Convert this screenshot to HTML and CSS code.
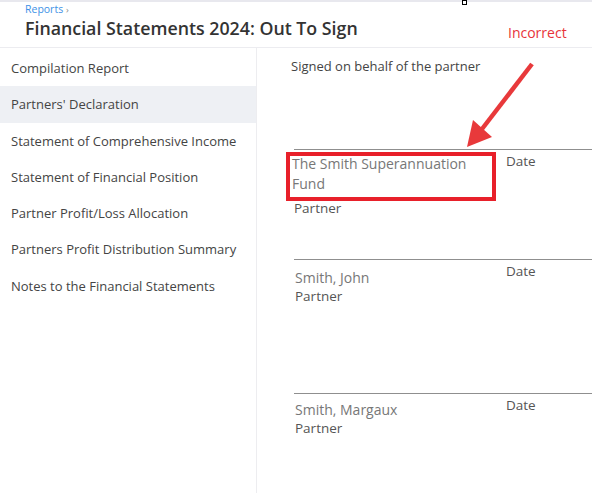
FILE: index.html
```html
<!DOCTYPE html>
<html>
<head>
<meta charset="utf-8">
<link rel="stylesheet" href="styles.css">
</head>
<body>
<div class="page">
  <header class="header">
    <div class="crumb"><a class="crumb-link">Reports</a> <span class="crumb-sep">›</span></div>
    <h1 class="title">Financial Statements 2024: Out To Sign</h1>
  </header>
  <div class="body">
    <nav class="sidebar">
      <div class="nav-item">Compilation Report</div>
      <div class="nav-item active">Partners' Declaration</div>
      <div class="nav-item">Statement of Comprehensive Income</div>
      <div class="nav-item">Statement of Financial Position</div>
      <div class="nav-item">Partner Profit/Loss Allocation</div>
      <div class="nav-item">Partners Profit Distribution Summary</div>
      <div class="nav-item">Notes to the Financial Statements</div>
    </nav>
    <main class="main">
      <div class="intro">Signed on behalf of the partner</div>
      <div class="sig sig-first">
        <div class="sig-who">
          <div class="sig-name">The Smith Superannuation Fund</div>
          <div class="sig-role">Partner</div>
        </div>
        <div class="sig-date">Date</div>
      </div>
      <div class="sig sig-second">
        <div class="sig-who">
          <div class="sig-name">Smith, John</div>
          <div class="sig-role">Partner</div>
        </div>
        <div class="sig-date">Date</div>
      </div>
      <div class="sig sig-third">
        <div class="sig-who">
          <div class="sig-name">Smith, Margaux</div>
          <div class="sig-role">Partner</div>
        </div>
        <div class="sig-date">Date</div>
      </div>
    </main>
  </div>

  <div class="cursor-mark"></div>
  <div class="note">Incorrect</div>
  <div class="note-box"></div>
  <svg class="note-arrow" width="592" height="493" viewBox="0 0 592 493">
    <line x1="532" y1="64" x2="482" y2="129" stroke="#e8393b" stroke-width="4.5" stroke-linecap="butt"/>
    <polygon points="467,147 473,120 492,137" fill="#e8393b"/>
  </svg>
</div>
</body>
</html>
```

FILE: styles.css
```css
* { box-sizing: border-box; }
html, body { margin: 0; padding: 0; background: #fff; }
body {
  font-family: "Open Sans", "Noto Sans", sans-serif;
  color: #444;
  width: 592px;
  height: 493px;
  overflow: hidden;
}
.page {
  position: relative;
  width: 592px;
  height: 493px;
  display: flex;
  flex-direction: column;
  border-top: 2px solid #e8e8ee;
}
.header {
  height: 46px;
  padding-left: 25px;
  border-bottom: 1px solid #ececf0;
}
.crumb {
  font-size: 10.5px;
  line-height: 13px;
  padding-top: 1px;
  color: #3e91e6;
}
.crumb-link { color: #3e91e6; text-decoration: none; }
.crumb-sep { color: #888; font-size: 9px; }
.title {
  margin: 0;
  font-size: 17.8px;
  line-height: 24px;
  font-weight: 600;
  color: #333;
}
.body {
  flex: 1;
  display: flex;
}
.sidebar {
  width: 257px;
  flex: none;
  border-right: 1px solid #ededf0;
  padding-top: 2px;
}
.nav-item {
  height: 36.3px;
  line-height: 36px;
  padding-left: 11px;
  font-size: 13px;
  color: #444;
  white-space: nowrap;
}
.nav-item.active { background: #eef0f4; }
.main {
  flex: 1;
  padding-top: 8px;
  padding-left: 34px;
}
.intro {
  font-size: 13px;
  line-height: 20px;
  color: #444;
}
.sig {
  margin-left: 3px;
  border-top: 1px solid #8f8f8f;
  display: flex;
  margin-right: -20px;
}
.sig-who { width: 212px; }
.sig-name {
  font-size: 14px;
  line-height: 20px;
  color: #777;
  padding-top: 8px;
  padding-left: 1px;
}
.sig-role {
  font-size: 13.5px;
  line-height: 17px;
  color: #555;
  padding-left: 1px;
}
.sig-date {
  font-size: 13.5px;
  line-height: 20px;
  padding-top: 1px;
  color: #555;
}
.sig-first { margin-top: 73px; height: 110px; }
.sig-first .sig-name { padding-top: 4px; padding-left: 0; margin-left: -2px; width: 192px; }
.sig-first .sig-role { margin-top: 5px; line-height: 18px; padding-left: 0; }
.sig-second { height: 134px; }
.sig-third .sig-name { padding-top: 6px; }

.cursor-mark {
  position: absolute;
  left: 462px;
  top: -2px;
  width: 5px;
  height: 5px;
  border: 1px solid #000;
  background: #fff;
}
.note {
  position: absolute;
  left: 508px;
  top: 20px;
  font-size: 14px;
  line-height: 22px;
  color: #e8333a;
}
.note-box {
  position: absolute;
  left: 286px;
  top: 150px;
  width: 210px;
  height: 49px;
  border: 4px solid #e8202a;
}
.note-arrow {
  position: absolute;
  left: 0;
  top: -2px;
}
```
